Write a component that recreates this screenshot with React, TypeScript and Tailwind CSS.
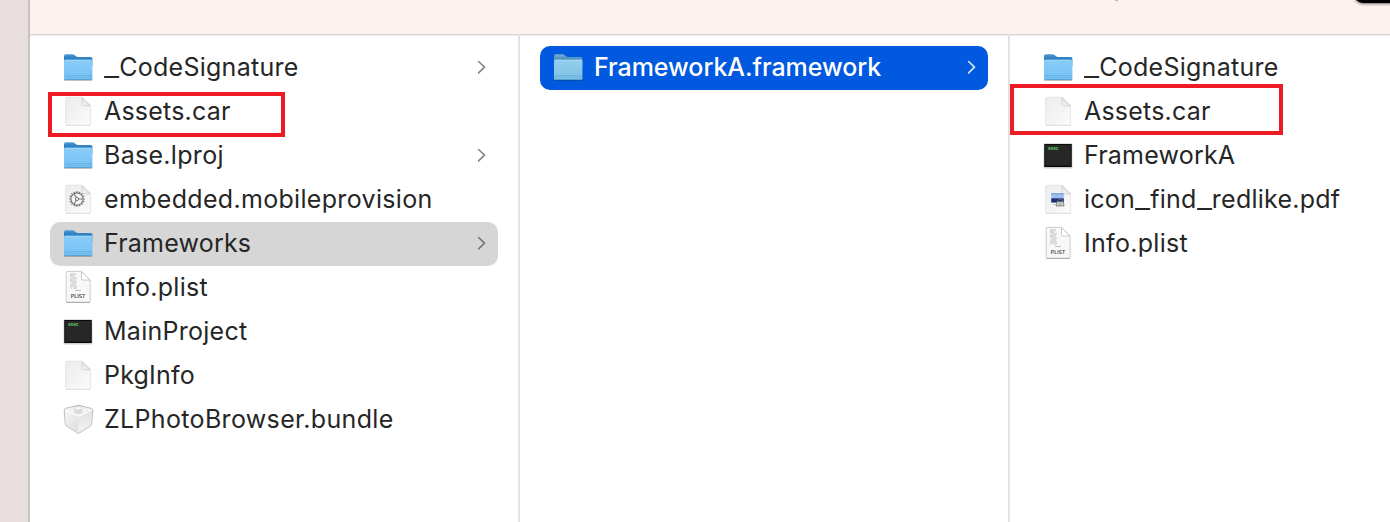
import React from "react";

type Kind = "folder" | "doc" | "gear" | "plist" | "exec" | "bundle" | "pdf";

interface Entry {
  name: string;
  kind: Kind;
  spacing: string;
  chevron?: boolean;
  state?: "muted" | "active";
}

const appEntries: Entry[] = [
  { name: "_CodeSignature", kind: "folder", spacing: "tracking-[0.27px]", chevron: true },
  { name: "Assets.car", kind: "doc", spacing: "tracking-[0.2px]" },
  { name: "Base.lproj", kind: "folder", spacing: "tracking-[0.3px]", chevron: true },
  { name: "embedded.mobileprovision", kind: "gear", spacing: "tracking-[0.32px]" },
  { name: "Frameworks", kind: "folder", spacing: "tracking-[0.2px]", chevron: true, state: "muted" },
  { name: "Info.plist", kind: "plist", spacing: "tracking-[0.3px]" },
  { name: "MainProject", kind: "exec", spacing: "tracking-[0.27px]" },
  { name: "PkgInfo", kind: "doc", spacing: "tracking-[0.2px]" },
  { name: "ZLPhotoBrowser.bundle", kind: "bundle", spacing: "tracking-[0.34px]" },
];

const frameworkEntries: Entry[] = [
  { name: "FrameworkA.framework", kind: "folder", spacing: "tracking-[-0.05px]", chevron: true, state: "active" },
];

const contentEntries: Entry[] = [
  { name: "_CodeSignature", kind: "folder", spacing: "tracking-[0.27px]" },
  { name: "Assets.car", kind: "doc", spacing: "tracking-[0.2px]" },
  { name: "FrameworkA", kind: "exec", spacing: "tracking-[0.2px]" },
  { name: "icon_find_redlike.pdf", kind: "pdf", spacing: "tracking-[0.25px]" },
  { name: "Info.plist", kind: "plist", spacing: "tracking-[0.3px]" },
];

function Defs() {
  return (
    <svg className="absolute size-0" aria-hidden="true">
      <defs>
        <linearGradient id="folderFront" x1="0" y1="0" x2="0" y2="1">
          <stop offset="0" stopColor="#8acdf8" />
          <stop offset="1" stopColor="#74c1f3" />
        </linearGradient>
        <linearGradient id="folderBack" x1="0" y1="0" x2="0" y2="1">
          <stop offset="0" stopColor="#559dd0" />
          <stop offset="0.3" stopColor="#3282c2" />
        </linearGradient>
        <linearGradient id="folderFrontActive" x1="0" y1="0" x2="0" y2="1">
          <stop offset="0" stopColor="#94cfee" />
          <stop offset="1" stopColor="#7fc0e4" />
        </linearGradient>
        <linearGradient id="folderBackActive" x1="0" y1="0" x2="0" y2="1">
          <stop offset="0" stopColor="#7ab3d8" />
          <stop offset="0.3" stopColor="#5595c0" />
        </linearGradient>
        <linearGradient id="paper" x1="0" y1="0" x2="1" y2="1">
          <stop offset="0" stopColor="#ececec" />
          <stop offset="1" stopColor="#fbfbfb" />
        </linearGradient>
        <linearGradient id="foldCorner" x1="0" y1="1" x2="1" y2="0">
          <stop offset="0" stopColor="#ffffff" />
          <stop offset="0.5" stopColor="#e2e2e2" />
        </linearGradient>
        <linearGradient id="brickLeft" x1="0" y1="0" x2="1" y2="1">
          <stop offset="0" stopColor="#f6f6f6" />
          <stop offset="1" stopColor="#dcdcdc" />
        </linearGradient>
        <linearGradient id="brickRight" x1="0" y1="0" x2="0" y2="1">
          <stop offset="0" stopColor="#e0e0e0" />
          <stop offset="1" stopColor="#f2f2f2" />
        </linearGradient>
      </defs>
    </svg>
  );
}

function Folder({ active }: { active?: boolean }) {
  return (
    <g>
      <rect x="2" y="32" width="28.4" height="3" rx="1" fill="#000" opacity="0.22" />
      <path
        d="M2 10 Q2 8.2 3.8 8.2 H10.6 Q11.6 8.2 12.5 9 L14 10.2 Q14.8 10.9 16 10.9 H28.8 Q30.4 10.9 30.4 12.5 V20 H2Z"
        fill={active ? "url(#folderBackActive)" : "url(#folderBack)"}
      />
      <path
        d="M2 15 Q2 13.8 3.4 13.8 H29 Q30.4 13.8 30.4 15 V32.5 Q30.4 34 28.9 34 H3.5 Q2 34 2 32.5Z"
        fill={active ? "url(#folderFrontActive)" : "url(#folderFront)"}
      />
      <path d="M3 14.3 H29.4" stroke="#a8dcfb" strokeWidth="0.7" />
      <path d="M2.3 29.5 H30.1 M2.3 31.2 H30.1" stroke="#5eaee2" strokeWidth="0.6" />
      <path d="M2.6 33.6 H29.8" stroke="#4c94c4" strokeWidth="0.8" />
    </g>
  );
}

function Paper() {
  return (
    <g>
      <path d="M4 34 V35 Q4 36 5.5 36 H27 Q28.5 36 28.5 35 V33Z" fill="#000" opacity="0.22" />
      <path
        d="M5.2 7.2 H20 L28.6 15.8 V33.8 Q28.6 35.4 27 35.4 H5.2 Q3.6 35.4 3.6 33.8 V8.8 Q3.6 7.2 5.2 7.2Z"
        fill="url(#paper)"
        stroke="#dedede"
        strokeWidth="0.7"
      />
      <path d="M20 7.4 V14.3 Q20 15.8 21.5 15.8 H28.5Z" fill="url(#foldCorner)" stroke="#c6c6c6" strokeWidth="0.7" />
    </g>
  );
}

function Gear() {
  const angles = Array.from({ length: 16 }, (_, i) => i * 22.5);
  return (
    <g transform="translate(15 21)" stroke="#777" fill="none">
      <circle r="6.1" strokeWidth="1.1" />
      {angles.map((a) => (
        <path key={a} d="M0 -6.2 V-7.9" strokeWidth="1.2" transform={`rotate(${a})`} />
      ))}
      <circle r="1.6" strokeWidth="1" />
      <path d="M1.7 0 H6 M-0.8 -1.5 L-3 -5.3 M-0.8 1.5 L-3 5.3" strokeWidth="1.1" />
    </g>
  );
}

function Plist() {
  return (
    <g>
      <path
        d="M5 5.4 H19.5 L28.2 14 V35.6 Q28.2 36.3 27.4 36.3 H5 Q4.2 36.3 4.2 35.6 V6.2 Q4.2 5.4 5 5.4Z"
        fill="#f8f8f8"
        stroke="#c2c2c2"
        strokeWidth="0.8"
      />
      <path d="M4.4 36.4 H28" stroke="#9f9f9f" strokeWidth="0.8" />
      <g stroke="#c0c0c0" strokeWidth="1">
        <path d="M8 8 H14" />
        <path d="M8 10 H13" />
        <path d="M10 12 H15" />
        <path d="M8 14 H14" />
        <path d="M10 16 H15" />
        <path d="M10 18 H14" />
        <path d="M8 20 H15" />
        <path d="M11 22 H15" />
        <path d="M13 24.5 H19" />
        <path d="M9 23 V8" strokeWidth="0.6" />
      </g>
      <path d="M19.5 5.6 V12.8 Q19.5 14 20.7 14 H28Z" fill="#fff" stroke="#b5b5b5" strokeWidth="0.7" />
      <text x="16.1" y="32" fontSize="5" fontWeight="600" fill="#444" textAnchor="middle" textLength="14.5" fontFamily="Inter, sans-serif">
        PLIST
      </text>
    </g>
  );
}

function Exec() {
  return (
    <g>
      <rect x="1.6" y="10" width="28.8" height="24.4" rx="1" fill="#000" opacity="0.2" />
      <rect x="2" y="9.6" width="28" height="23.4" fill="#a9b0b0" />
      <rect x="2.3" y="10" width="27.4" height="23" fill="#0b0b0b" />
      <rect x="3.3" y="11" width="25.4" height="20.6" fill="#272727" />
      <text x="6" y="15.8" fontSize="4.8" fontWeight="700" fill="#5fc865" textLength="10.6" fontFamily="Liberation Mono, monospace">
        exec
      </text>
    </g>
  );
}

function Bundle() {
  return (
    <g>
      <path d="M16.5 7.2 L29.4 10.4 Q30.8 10.8 30.8 12 L29.8 25.5 Q29.7 27 28.4 28 L16.5 35.6 L4.6 28 Q3.3 27 3.2 25.5 L2.2 12 Q2.2 10.8 3.6 10.4Z" fill="#f1f1f1" stroke="#b4b4b4" strokeWidth="0.9" strokeLinejoin="round" />
      <path d="M3 12 L16.5 18.6 V34.6 L4.8 27 Q4 26.4 3.9 25Z" fill="url(#brickLeft)" />
      <path d="M30 12 L16.5 18.6 V34.6 L28.2 27 Q29 26.4 29.1 25Z" fill="url(#brickRight)" />
      <path d="M3.2 12 L16.5 18.4 L29.8 12" fill="none" stroke="#fff" strokeWidth="1" />
      <path d="M12.2 10.4 V14.3 Q12.2 16 16.2 16 Q20.2 16 20.2 14.3 V10.4Z" fill="#dadada" />
      <ellipse cx="16.2" cy="10.2" rx="4" ry="1.8" fill="#f7f7f7" stroke="#c5c5c5" strokeWidth="0.6" />
    </g>
  );
}

function PdfPreview() {
  return (
    <g>
      <rect x="9.2" y="15.2" width="12.6" height="12.6" fill="#fff" />
      <rect x="9.2" y="15.2" width="12.6" height="5.4" fill="#9dbef0" />
      <rect x="9.2" y="15.2" width="12.6" height="1.2" fill="#7f9fd8" />
      <rect x="9.2" y="20.3" width="12.6" height="4.3" fill="#172e78" />
      <path d="M10 26.4 H15" stroke="#ccc" strokeWidth="1.2" />
      <path d="M15.5 23.8 Q15.5 21 18 21 Q20.5 21 20.5 23.8" fill="none" stroke="#666" strokeWidth="1" />
      <path d="M14.8 23.6 H21.3 L22 28 H14Z" fill="#d0d0d0" stroke="#555" strokeWidth="0.6" />
      <circle cx="18" cy="26" r="1.1" fill="#eee" stroke="#777" strokeWidth="0.5" />
    </g>
  );
}

function EntryIcon({ kind, active }: { kind: Kind; active?: boolean }) {
  return (
    <svg width="32" height="44" viewBox="0 0 32 44" className="shrink-0" aria-hidden="true">
      {kind === "folder" && <Folder active={active} />}
      {(kind === "doc" || kind === "gear" || kind === "pdf") && <Paper />}
      {kind === "gear" && <Gear />}
      {kind === "pdf" && <PdfPreview />}
      {kind === "plist" && <Plist />}
      {kind === "exec" && <Exec />}
      {kind === "bundle" && <Bundle />}
    </svg>
  );
}

function Label({ entry }: { entry: Entry }) {
  const parts = entry.name.split("_");
  return (
    <span className={`ml-2.5 flex-1 whitespace-nowrap pb-0.5 ${entry.spacing}`}>
      {parts.map((part, i) => (
        <React.Fragment key={i}>
          {i > 0 && <span className="mr-[3.5px] inline-block origin-left scale-x-[1.32] leading-none">_</span>}
          {part}
        </React.Fragment>
      ))}
    </span>
  );
}

function Row({ entry }: { entry: Entry }) {
  const active = entry.state === "active";
  const tone = active
    ? "bg-[#0059df] text-white font-medium"
    : entry.state === "muted"
      ? "bg-[#d6d6d6] text-[#262626]"
      : "text-[#262626]";
  return (
    <li className={`flex h-11 items-center rounded-[10px] pl-3 pr-3 text-[25px] leading-[42px] ${tone}`}>
      <EntryIcon kind={entry.kind} active={active} />
      <Label entry={entry} />
      {entry.chevron && (
        <svg width="10" height="44" viewBox="0 0 10 44" className="shrink-0" aria-hidden="true">
          <path
            d="M2.6 15.5 L8.5 21.2 L2.6 26.9"
            fill="none"
            stroke={active ? "#dce9fc" : entry.state === "muted" ? "#777" : "#858585"}
            strokeWidth="1.6"
            strokeLinecap="round"
            strokeLinejoin="round"
          />
        </svg>
      )}
    </li>
  );
}

function Column({ entries, outline, last }: { entries: Entry[]; outline?: string; last?: boolean }) {
  return (
    <section className={`relative w-[490px] shrink-0 px-5 pt-3 ${last ? "" : "border-r-2 border-[#e2e2e2]"}`}>
      <ul>
        {entries.map((entry) => (
          <Row key={entry.name} entry={entry} />
        ))}
      </ul>
      {outline && <div className={`absolute border-4 border-[#ed1c24] ${outline}`} />}
    </section>
  );
}

export default function App() {
  return (
    <div className="relative flex h-[522px] w-[1390px] overflow-hidden bg-[#e8dedd] font-['Inter','Liberation_Sans',sans-serif]">
      <Defs />
      <div className="w-[30px] shrink-0 border-r-2 border-[#cbc3c3]" />
      <main className="flex w-[1360px] shrink-0 flex-col overflow-hidden bg-white">
        <header className="h-[34px] shrink-0 bg-[#fcf2f0]" />
        <div className="relative flex flex-1 shadow-[inset_0_1px_0_#d5d1d1,inset_0_2px_0_#f0eeee]">
          <Column entries={appEntries} outline="left-[18px] top-[58px] h-[45px] w-[237px]" />
          <Column entries={frameworkEntries} />
          <Column entries={contentEntries} outline="left-0 top-[50px] h-[51px] w-[273px]" last />
        </div>
      </main>
      <div className="absolute -top-10 left-[1354px] h-[43px] w-20 rounded-[9px] bg-black shadow-[0_1px_3px_rgba(0,0,0,0.55)]" />
      <div className="absolute left-[1115px] top-0 h-px w-[3px] bg-[#bdb5b4]" />
    </div>
  );
}
